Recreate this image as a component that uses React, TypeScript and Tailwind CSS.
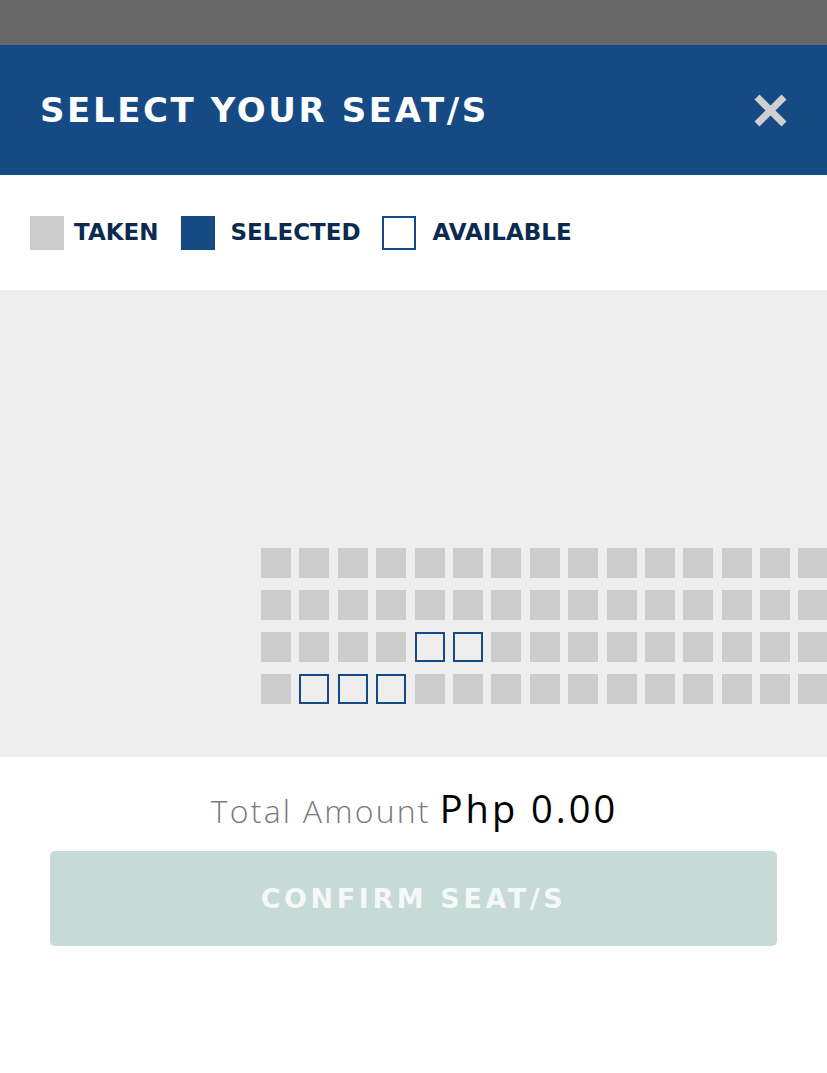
import React from "react";

const COLS = 18;
const outlined: Record<number, number[]> = { 2: [4, 5], 3: [1, 2, 3] };
const BOLD = { fontFamily: '"DejaVu Sans", "Open Sans", sans-serif' };

function Seat({ available }: { available: boolean }) {
  return available ? (
    <div className="w-[30px] h-[30px] shrink-0 border-2 border-[#154a84]" />
  ) : (
    <div className="w-[30px] h-[30px] shrink-0 bg-[#cccccc]" />
  );
}

export default function App() {
  return (
    <div className="w-[827px] h-[1073px] bg-white overflow-hidden" style={{ fontFamily: '"Open Sans", "Noto Sans", sans-serif' }}>
      <div className="h-[45px] bg-[#676767]" />
      <div className="h-[130px] bg-[#154a84] flex items-center justify-between pl-[40px] pr-[38px]">
        <h1 className="text-white font-bold text-[34px] tracking-[2.6px] leading-none" style={BOLD}>SELECT YOUR SEAT/S</h1>
        <svg width="37" height="37" viewBox="0 0 37 37">
          <path d="M5 5 L32 32 M32 5 L5 32" stroke="#d0d0d0" strokeWidth="7" strokeLinecap="butt" />
        </svg>
      </div>
      <div className="h-[115px] flex items-center pl-[30px]" style={BOLD}>
        <div className="w-[34px] h-[34px] bg-[#cccccc]" />
        <span className="ml-[10px] text-[#0c2a50] font-bold text-[23px] leading-none">TAKEN</span>
        <div className="ml-[22px] w-[34px] h-[34px] bg-[#154a84]" />
        <span className="ml-[16px] text-[#0c2a50] font-bold text-[23px] leading-none">SELECTED</span>
        <div className="ml-[21px] w-[34px] h-[34px] border-2 border-[#154a84]" />
        <span className="ml-[17px] text-[#0c2a50] font-bold text-[23px] leading-none">AVAILABLE</span>
      </div>
      <div className="h-[467px] bg-[#eeeeee] overflow-hidden pt-[258px] pl-[261px]">
        <div className="flex flex-col gap-[12px]">
          {[0, 1, 2, 3].map((r) => (
            <div key={r} className="flex gap-[8.4px]">
              {Array.from({ length: COLS }).map((_, c) => (
                <Seat key={c} available={(outlined[r] || []).includes(c)} />
              ))}
            </div>
          ))}
        </div>
      </div>
      <div className="flex justify-center items-baseline pt-[32px] gap-[9px] pl-[2px]">
        <span className="text-[#7a7a7a] text-[32px] font-light tracking-[2.2px] leading-none">Total Amount</span>
        <span className="text-black text-[38px] tracking-[3px] leading-none">Php 0.00</span>
      </div>
      <div className="mx-[50px] mt-[24px] h-[95px] rounded-[5px] bg-[#c6dad6] flex items-center justify-center">
        <span className="text-[#f4f8f7] font-bold text-[27px] tracking-[3.6px] leading-none" style={BOLD}>CONFIRM SEAT/S</span>
      </div>
    </div>
  );
}
